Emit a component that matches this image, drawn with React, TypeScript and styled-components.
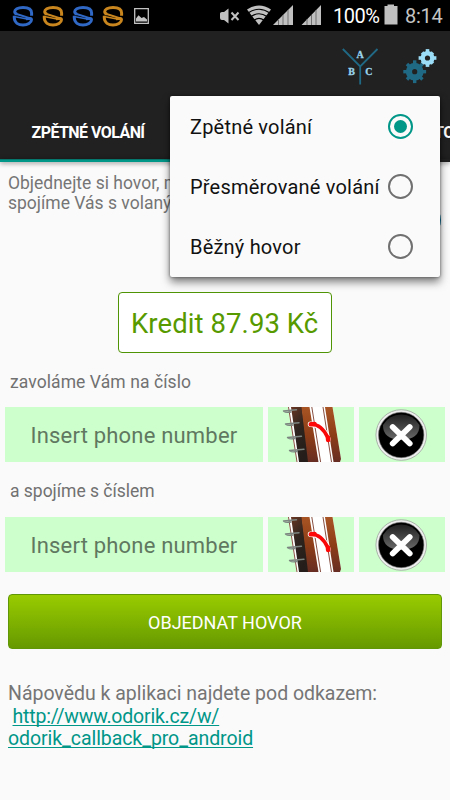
import React from "react";
import styled, { createGlobalStyle, css } from "styled-components";

const GlobalStyle = createGlobalStyle`
  * { box-sizing: border-box; }
  body { margin: 0; background: #fafafa; font-family: Roboto, sans-serif; }
`;

interface TypeProps { $size: number; $track?: number; }
const type = css<TypeProps>`
  font-size: ${(p) => p.$size}px;
  letter-spacing: ${(p) => p.$track ?? 0}px;
  white-space: pre;
`;

const Screen = styled.div`
  position: relative;
  width: 450px;
  height: 800px;
  overflow: hidden;
  background: #fafafa;
`;
const StatusBar = styled.div`
  height: 31px;
  background: #000;
  display: flex;
  justify-content: space-between;
`;
const Notifications = styled.div`
  display: flex;
  padding: 5px 0 0 12px;
  gap: 8px;
`;
const SystemIcons = styled.div`
  display: flex;
  width: 240px;
`;
const Percent = styled.span<TypeProps>`
  ${type}
  color: #fff;
  line-height: 33px;
  width: 60px;
  padding-left: 11px;
`;
const Clock = styled.span<TypeProps>`
  ${type}
  color: #c4c4c4;
  line-height: 33px;
  padding-left: 1px;
`;
const AppBar = styled.header`
  height: 128px;
  background: #212121;
  display: flex;
  flex-direction: column;
`;
const Actions = styled.div`
  height: 74px;
  padding: 14px 12px 0 0;
  display: flex;
  justify-content: flex-end;
  gap: 24px;
`;
const Tabs = styled.nav`
  flex: 1;
  display: flex;
  align-items: center;
  justify-content: space-between;
  padding: 1px 0 0 31.5px;
`;
const Tab = styled.span<TypeProps & { $clip?: boolean }>`
  ${type}
  color: #fff;
  font-weight: 700;
  line-height: 20px;
  ${(p) => p.$clip && "width: 16px; overflow: hidden;"}
`;
const TabTrack = styled.div`
  height: 2.5px;
  margin-bottom: 0.5px;
  background: #212121;
  box-shadow: 0 1px 5px rgba(0, 0, 0, 0.5);
`;
const Indicator = styled.div`
  width: 176px;
  height: 100%;
  background: linear-gradient(#07675e, #009688 50%);
`;
const Content = styled.main`
  display: flex;
  flex-direction: column;
`;
const Intro = styled.p<TypeProps>`
  ${type}
  margin: 11px 0 0 8px;
  height: 39px;
  line-height: 20px;
  color: #757575;
`;
const HelpDot = styled.div`
  width: 36px;
  height: 36px;
  border-radius: 50%;
  background: #0b6f96;
  position: absolute;
  left: 405px;
  top: 202px;
`;
const Credit = styled.div<TypeProps>`
  ${type}
  width: 214px;
  height: 61px;
  margin: 80px 0 0 118px;
  border: 1px solid #4f9404;
  border-radius: 4px;
  background: #fff;
  color: #579a00;
  line-height: 62px;
  padding-left: 12px;
`;
const FieldLabel = styled.label<TypeProps & { $height: number }>`
  ${type}
  color: #717171;
  height: ${(p) => p.$height}px;
  line-height: 58px;
  padding-left: 10px;
`;
const Row = styled.div`
  display: grid;
  grid-template-columns: 258px 86px 86px;
  grid-template-rows: 55px;
  gap: 5px;
  height: 55px;
  padding-left: 5px;
`;
const Field = styled.div<TypeProps>`
  ${type}
  background: #ccffcc;
  color: #607860;
  line-height: 55px;
  padding: 1px 0 0 25.5px;
`;
const IconButton = styled.button`
  border: 0;
  padding: 0;
  background: #ccffcc;
  display: block;
  overflow: hidden;
  svg { display: block; }
`;
const OrderButton = styled.button<TypeProps>`
  ${type}
  font-family: inherit;
  margin: 22px 0 0 8px;
  width: 434px;
  height: 55px;
  padding: 1px 0 0;
  border: 1px solid #5f9706;
  border-radius: 4px;
  background: linear-gradient(#99cc00, #669900);
  color: #fff;
`;
const Help = styled.section`
  display: flex;
  flex-direction: column;
  align-items: flex-start;
  margin: 34px 0 0 8px;
`;
const HelpText = styled.span<TypeProps>`
  ${type}
  line-height: 22.5px;
  color: #757575;
`;
const LinkLine = styled.a<TypeProps & { $indent?: number }>`
  ${type}
  margin-left: ${(p) => p.$indent ?? 0}px;
  line-height: 22.5px;
  color: #009688;
  text-decoration: underline;
  text-decoration-thickness: 1px;
  text-underline-offset: 2px;
  text-decoration-skip-ink: none;
`;
const Menu = styled.div`
  position: absolute;
  left: 170px;
  top: 96px;
  width: 270px;
  height: 181px;
  border-radius: 2px;
  background: #fafafa;
  box-shadow: 0 5px 9px rgba(0, 0, 0, 0.5), 0 0 3px rgba(0, 0, 0, 0.5);
`;
const MenuItem = styled.div`
  height: 60px;
  padding: 1px 27.5px 0 20px;
  display: flex;
  align-items: center;
  justify-content: space-between;
`;
const MenuText = styled.span<TypeProps>`
  ${type}
  color: #111;
  width: 196px;
`;
const Radio = styled.span<{ $on?: boolean }>`
  width: 25px;
  height: 25px;
  flex: none;
  border-radius: 50%;
  border: 2px solid ${(p) => (p.$on ? "#009688" : "#707070")};
  display: grid;
  place-items: center;
  &::after {
    content: "";
    width: 13px;
    height: 13px;
    border-radius: 50%;
    background: ${(p) => (p.$on ? "#009688" : "transparent")};
  }
`;

const SwirlIcon = ({ color }: { color: string }) => (
  <svg width="22" height="23" viewBox="0 0 22 23" fill="none" stroke={color}>
    <path d="M19.600 10.700V8C19.600 4.500 16.500 2.400 11 2.400C5.500 2.400 2.700 4.600 2.700 6.800C2.700 8.300 3.600 8.700 5 9.200" strokeWidth="3" />
    <path d="M3 8.500L18.500 13.400" strokeWidth="2" />
    <path d="M2.300 10.800V13C2.500 17.500 6.500 20 11 20C15.500 20 19.500 17.500 19.500 14.800C19.500 13.300 17 13.400 14 13.700" strokeWidth="3" />
    <path d="M2 11.500L15 14" strokeWidth="1.300" />
  </svg>
);

const PictureIcon = () => (
  <svg width="17" height="20" viewBox="0 0 17 20">
    <path d="M2.700 3.600H16.300V18.300H2.700Z" fill="none" stroke="#c2c2c2" strokeWidth="1.300" />
    <path d="M4 16.500V13.500L6.500 10.200L9.500 13L12 12L15 14.500V16.500Z" fill="#c2c2c2" />
  </svg>
);

const Signals = () => (
  <svg width="112" height="30" viewBox="0 0 112 30" fill="#c0c0c0">
    <path d="M10 13.500Q10 12 12 12H14L18.500 8.500V23.500L14 20H12Q10 20 10 18Z" />
    <path d="M21.500 12.500L28.500 20M28.500 12.500L21.500 20" stroke="#c0c0c0" strokeWidth="2" />
    <path d="M37 9.500Q49 1.500 61 9.500L49 25Z" />
    <path d="M38 13Q49 5.500 60 13M41 16.500Q49 11 57 16.500M44 20.300Q49 16.500 54 20.300" fill="none" stroke="#000" strokeWidth="1.100" />
    <path d="M63 25L83 5V25ZM91.500 25L111 5V25Z" />
    <path d="M68.500 19V25M73 15V25M78 10V25M97 19V25M101.500 15V25M106 10V25" stroke="#707070" strokeWidth="1" />
  </svg>
);

const Battery = () => (
  <svg width="22" height="30" viewBox="0 0 22 30">
    <path d="M2.500 6H5.500V4.500H12V6H15.500V24.500H2.500Z" fill="#c0c0c0" />
  </svg>
);

const AbcIcon = () => (
  <svg width="38" height="40" viewBox="0 0 38 40">
    <path d="M1.800 4L19.200 21.500L36.500 4M19.200 21V39.500" fill="none" stroke="#206985" strokeWidth="1.800" />
    <g fill="#9bd6ee" stroke="#9bd6ee" strokeWidth="0.300" fontFamily="Liberation Serif" fontWeight="700" fontSize="10" textAnchor="middle">
      <text x="19" y="12.700">A</text>
      <text x="10.500" y="29.500">B</text>
      <text x="27.800" y="29.500">C</text>
    </g>
  </svg>
);

interface GearProps { x: number; y: number; r: number; tooth: number; color: string; hole: number; diagonal: number; }
const Gear = ({ x, y, r, tooth, color, hole, diagonal }: GearProps) => (
  <g transform={`translate(${x} ${y})`} fill={color}>
    {[0, 45, 90, 135, 180, 225, 270, 315].map((angle) => (
      <rect key={angle} x={-tooth / 2} y={angle % 90 ? -r * diagonal : -r} width={tooth} height={r * 0.5} transform={`rotate(${angle})`} />
    ))}
    <circle r={r * 0.78} />
    <circle r={hole} fill="#212121" />
  </g>
);

const GearsIcon = () => (
  <svg width="35" height="40" viewBox="0 0 35 40">
    <Gear x={11.700} y={26.700} r={11.400} tooth={3.400} color="#206985" hole={2.600} diagonal={0.96} />
    <Gear x={24.500} y={13} r={8.900} tooth={3.600} color="#9bdcf6" hole={2.600} diagonal={0.86} />
  </svg>
);

const PhoneBookIcon = ({ id }: { id: string }) => (
  <svg width="86" height="55" viewBox="0 0 86 55">
    <defs>
      <linearGradient id={`${id}-spine`} x1="0" y1="0" x2="0.400" y2="1">
        <stop offset="0" stopColor="#6a3723" /><stop offset="0.450" stopColor="#30251f" /><stop offset="1" stopColor="#241d19" />
      </linearGradient>
      <linearGradient id={`${id}-cover`} x1="0" y1="0" x2="0" y2="1">
        <stop offset="0" stopColor="#a85424" /><stop offset="0.500" stopColor="#8d3d17" /><stop offset="1" stopColor="#672d22" />
      </linearGradient>
    </defs>
    <path d="M20 0H64.500L73 52L72 55H28.500Z" fill="#fff" />
    <path d="M23 0H34L41 55H31Z" fill={`url(#${id}-spine)`} />
    <path d="M33.500 0H41.500L50.500 55H40Z" fill={`url(#${id}-cover)`} />
    <path d="M57 0H64.500L73 52L72 55H65.500Z" fill={`url(#${id}-cover)`} />
    <path d="M20.500 0L29 55M43.800 0L52.600 55M55 0L63.500 55" stroke="#7b3b2b" strokeWidth="0.900" />
    {[4, 17, 30.5, 43.5].map((y, i) => (
      <path key={y} d={`M${15.5 + i * 2} ${y}L${28.5 + i * 2.5} ${y - 1.2}M${16 + i * 2} ${y + 0.5}Q${18 + i * 2} ${y + 2} ${23 + i * 2} ${y + 1}`} fill="none" stroke="#7d8580" strokeWidth="1.400" strokeLinecap="round" />
    ))}
    <path d="M42.500 17.300Q54 17 60 32" fill="none" stroke="#fff" strokeWidth="5.500" strokeLinecap="round" />
    <path d="M43 17Q54 17.500 60 31" fill="none" stroke="#f80808" strokeWidth="3.500" />
    <path d="M42.800 17.300L46.500 17M60 30.500L60.200 33" stroke="#ff0808" strokeWidth="4.600" strokeLinecap="round" />
  </svg>
);

const ClearIcon = ({ id }: { id: string }) => (
  <svg width="86" height="55" viewBox="0 0 86 55">
    <defs>
      <linearGradient id={`${id}-gloss`} x1="0.500" y1="0" x2="0.500" y2="1">
        <stop offset="0" stopColor="#202020" /><stop offset="1" stopColor="#6a6a6a" />
      </linearGradient>
    </defs>
    <circle cx="42.200" cy="28" r="25.300" fill="#eee" stroke="#a9b5a9" strokeWidth="1" />
    <circle cx="42.200" cy="28" r="22.700" fill="#000" stroke="#777" strokeWidth="0.600" />
    <path d="M24 18A21 21 0 0 1 60.500 18Q61 32 42.200 33Q23.500 32 24 18Z" fill={`url(#${id}-gloss)`} />
    <path d="M33.700 20L50.700 36.500M50.700 20L33.700 36.500" stroke="#fff" strokeWidth="5.800" strokeLinecap="round" />
  </svg>
);

const PhoneRow = ({ id }: { id: string }) => (
  <Row>
    <Field $size={22} $track={0.2}>Insert phone number</Field>
    <IconButton><PhoneBookIcon id={id} /></IconButton>
    <IconButton><ClearIcon id={id} /></IconButton>
  </Row>
);

const modes = ["Zpětné volání", "Přesměrované volání", "Běžný hovor"];

export default function App() {
  return (
    <Screen>
      <GlobalStyle />
      <StatusBar>
        <Notifications>
          {["#2f68c5", "#c9861f", "#2f68c5", "#c9861f"].map((c, i) => <SwirlIcon key={i} color={c} />)}
          <PictureIcon />
        </Notifications>
        <SystemIcons>
          <Signals />
          <Percent $size={20} $track={-0.5}>100%</Percent>
          <Battery />
          <Clock $size={20} $track={-0.3}>8:14</Clock>
        </SystemIcons>
      </StatusBar>
      <AppBar>
        <Actions><AbcIcon /><GearsIcon /></Actions>
        <Tabs>
          <Tab $size={16} $track={-0.56}>ZPĚTNÉ VOLÁNÍ</Tab>
          <Tab $size={16} $track={-0.5} $clip>TO</Tab>
        </Tabs>
      </AppBar>
      <TabTrack><Indicator /></TabTrack>
      <Content>
        <Intro $size={17.5} $track={0}>{"Objednejte si hovor, my\nspojíme Vás s volaným"}</Intro>
        <HelpDot />
        <Credit $size={27.5} $track={0.08}>Kredit 87.93 Kč</Credit>
        <FieldLabel $height={54} $size={17.5} $track={0.08}>zavoláme Vám na číslo</FieldLabel>
        <PhoneRow id="callback" />
        <FieldLabel $height={55} $size={17.5} $track={-0.02}>a spojíme s číslem</FieldLabel>
        <PhoneRow id="target" />
        <OrderButton $size={18} $track={0}>OBJEDNAT HOVOR</OrderButton>
        <Help>
          <HelpText $size={19.5} $track={-0.02}>Nápovědu k aplikaci najdete pod odkazem:</HelpText>
          <LinkLine $size={19.5} $track={-0.2} $indent={4.5}>http://www.odorik.cz/w/</LinkLine>
          <LinkLine $size={19.5} $track={-0.07}>odorik_callback_pro_android</LinkLine>
        </Help>
      </Content>
      <Menu>
        {modes.map((mode, i) => (
          <MenuItem key={mode}>
            <MenuText $size={20} $track={0.2}>{mode}</MenuText>
            <Radio $on={i === 0} />
          </MenuItem>
        ))}
      </Menu>
    </Screen>
  );
}
